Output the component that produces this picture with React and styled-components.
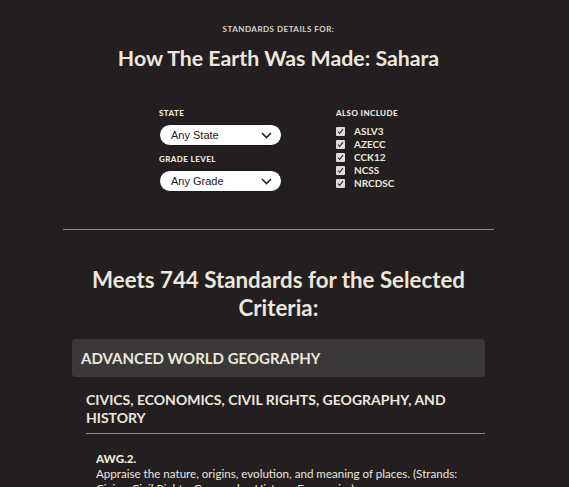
import styled, { createGlobalStyle } from "styled-components";

const GlobalStyle = createGlobalStyle`
  html, body {
    margin: 0;
    padding: 0;
    background: #231f20;
  }
  body {
    font-family: Lato, "Noto Sans", sans-serif;
    color: #ebe7db;
  }
`;

const Page = styled.div`
  width: 431px;
  margin-left: 63px;
  padding-top: 23px;
`;

const Header = styled.header`
  text-align: center;
`;

const Eyebrow = styled.div`
  font-size: 8px;
  font-weight: 700;
  letter-spacing: 0.5px;
  text-transform: uppercase;
  color: #d9d5cb;
  line-height: 12px;
`;

const Title = styled.h1`
  margin: 9px 0 0;
  font-size: 21.3px;
  font-weight: 700;
  line-height: 28px;
`;

const Filters = styled.div`
  display: flex;
  margin: 36px 0 0 96px;
  gap: 54px;
  height: 89px;
`;

const FilterColumn = styled.div`
  display: flex;
  flex-direction: column;
  width: ${(p) => p.$width}px;
`;

const Label = styled.div`
  font-size: 8px;
  font-weight: 900;
  letter-spacing: 0.4px;
  text-transform: uppercase;
  line-height: 10px;
  margin-top: ${(p) => p.$top || 0}px;
`;

const Select = styled.div`
  margin-top: 6px;
  height: 22px;
  box-sizing: border-box;
  background: #fff;
  border: 1px solid #1a1a1a;
  border-radius: 11px;
  display: flex;
  align-items: center;
  justify-content: space-between;
  padding: 0 9px 0 11px;
  font-family: "Liberation Sans", Arial, sans-serif;
  font-size: 11px;
  color: #222;
`;

const CheckList = styled.ul`
  list-style: none;
  margin: 8px 0 0;
  padding: 0;
  display: flex;
  flex-direction: column;
  gap: 3px;
`;

const CheckRow = styled.li`
  display: flex;
  align-items: center;
  gap: 9px;
  height: 10px;
  font-size: 10px;
  font-weight: 700;
`;

const Box = styled.span`
  width: 9px;
  height: 9px;
  background: #dcdcdc;
  border-radius: 1px;
  display: flex;
  align-items: center;
  justify-content: center;
`;

const Divider = styled.hr`
  margin: 32px 0 0;
  border: 0;
  border-top: 1px solid #8a8783;
`;

const Results = styled.section`
  padding-top: 36px;
`;

const ResultsHeading = styled.h2`
  margin: 0;
  text-align: center;
  font-size: 22.3px;
  font-weight: 700;
  line-height: 28px;
  padding: 0 20px;
`;

const Category = styled.div`
  margin: 17px 9px 0;
  height: 38px;
  background: #3a3839;
  border-radius: 4px;
  display: flex;
  align-items: center;
  padding: 0 9px;
  font-size: 15px;
  font-weight: 700;
  text-transform: uppercase;
`;

const Strand = styled.h3`
  margin: 14px 9px 0 23px;
  padding-bottom: 6px;
  border-bottom: 1px solid #8a8783;
  font-size: 14px;
  font-weight: 700;
  line-height: 18px;
  text-transform: uppercase;
`;

const Standard = styled.div`
  margin: 17px 30px 0 33px;
  font-size: 11.6px;
  line-height: 15px;
`;

const Code = styled.div`
  font-weight: 900;
`;

const Chevron = () => (
  <svg width="11" height="7" viewBox="0 0 11 7" fill="none">
    <path d="M1 1l4.5 4.5L10 1" stroke="#222" strokeWidth="1.6" />
  </svg>
);

const Check = () => (
  <svg width="7" height="7" viewBox="0 0 7 7" fill="none">
    <path d="M1 3.6l1.7 1.8L6 1.2" stroke="#333" strokeWidth="1.2" />
  </svg>
);

const sources = ["ASLV3", "AZECC", "CCK12", "NCSS", "NRCDSC"];

export default function App() {
  return (
    <>
      <GlobalStyle />
      <Page>
        <Header>
          <Eyebrow>Standards details for:</Eyebrow>
          <Title>How The Earth Was Made: Sahara</Title>
        </Header>
        <Filters>
          <FilterColumn $width={123}>
            <Label>State</Label>
            <Select>
              Any State
              <Chevron />
            </Select>
            <Label $top={8}>Grade Level</Label>
            <Select>
              Any Grade
              <Chevron />
            </Select>
          </FilterColumn>
          <FilterColumn $width={100}>
            <Label>Also Include</Label>
            <CheckList>
              {sources.map((s) => (
                <CheckRow key={s}>
                  <Box>
                    <Check />
                  </Box>
                  {s}
                </CheckRow>
              ))}
            </CheckList>
          </FilterColumn>
        </Filters>
        <Divider />
        <Results>
          <ResultsHeading>Meets 744 Standards for the Selected Criteria:</ResultsHeading>
          <Category>Advanced World Geography</Category>
          <Strand>Civics, Economics, Civil Rights, Geography, and History</Strand>
          <Standard>
            <Code>AWG.2.</Code>
            Appraise the nature, origins, evolution, and meaning of places. (Strands:
            Civics, Civil Rights, Geography, History, Economics)
          </Standard>
        </Results>
      </Page>
    </>
  );
}
